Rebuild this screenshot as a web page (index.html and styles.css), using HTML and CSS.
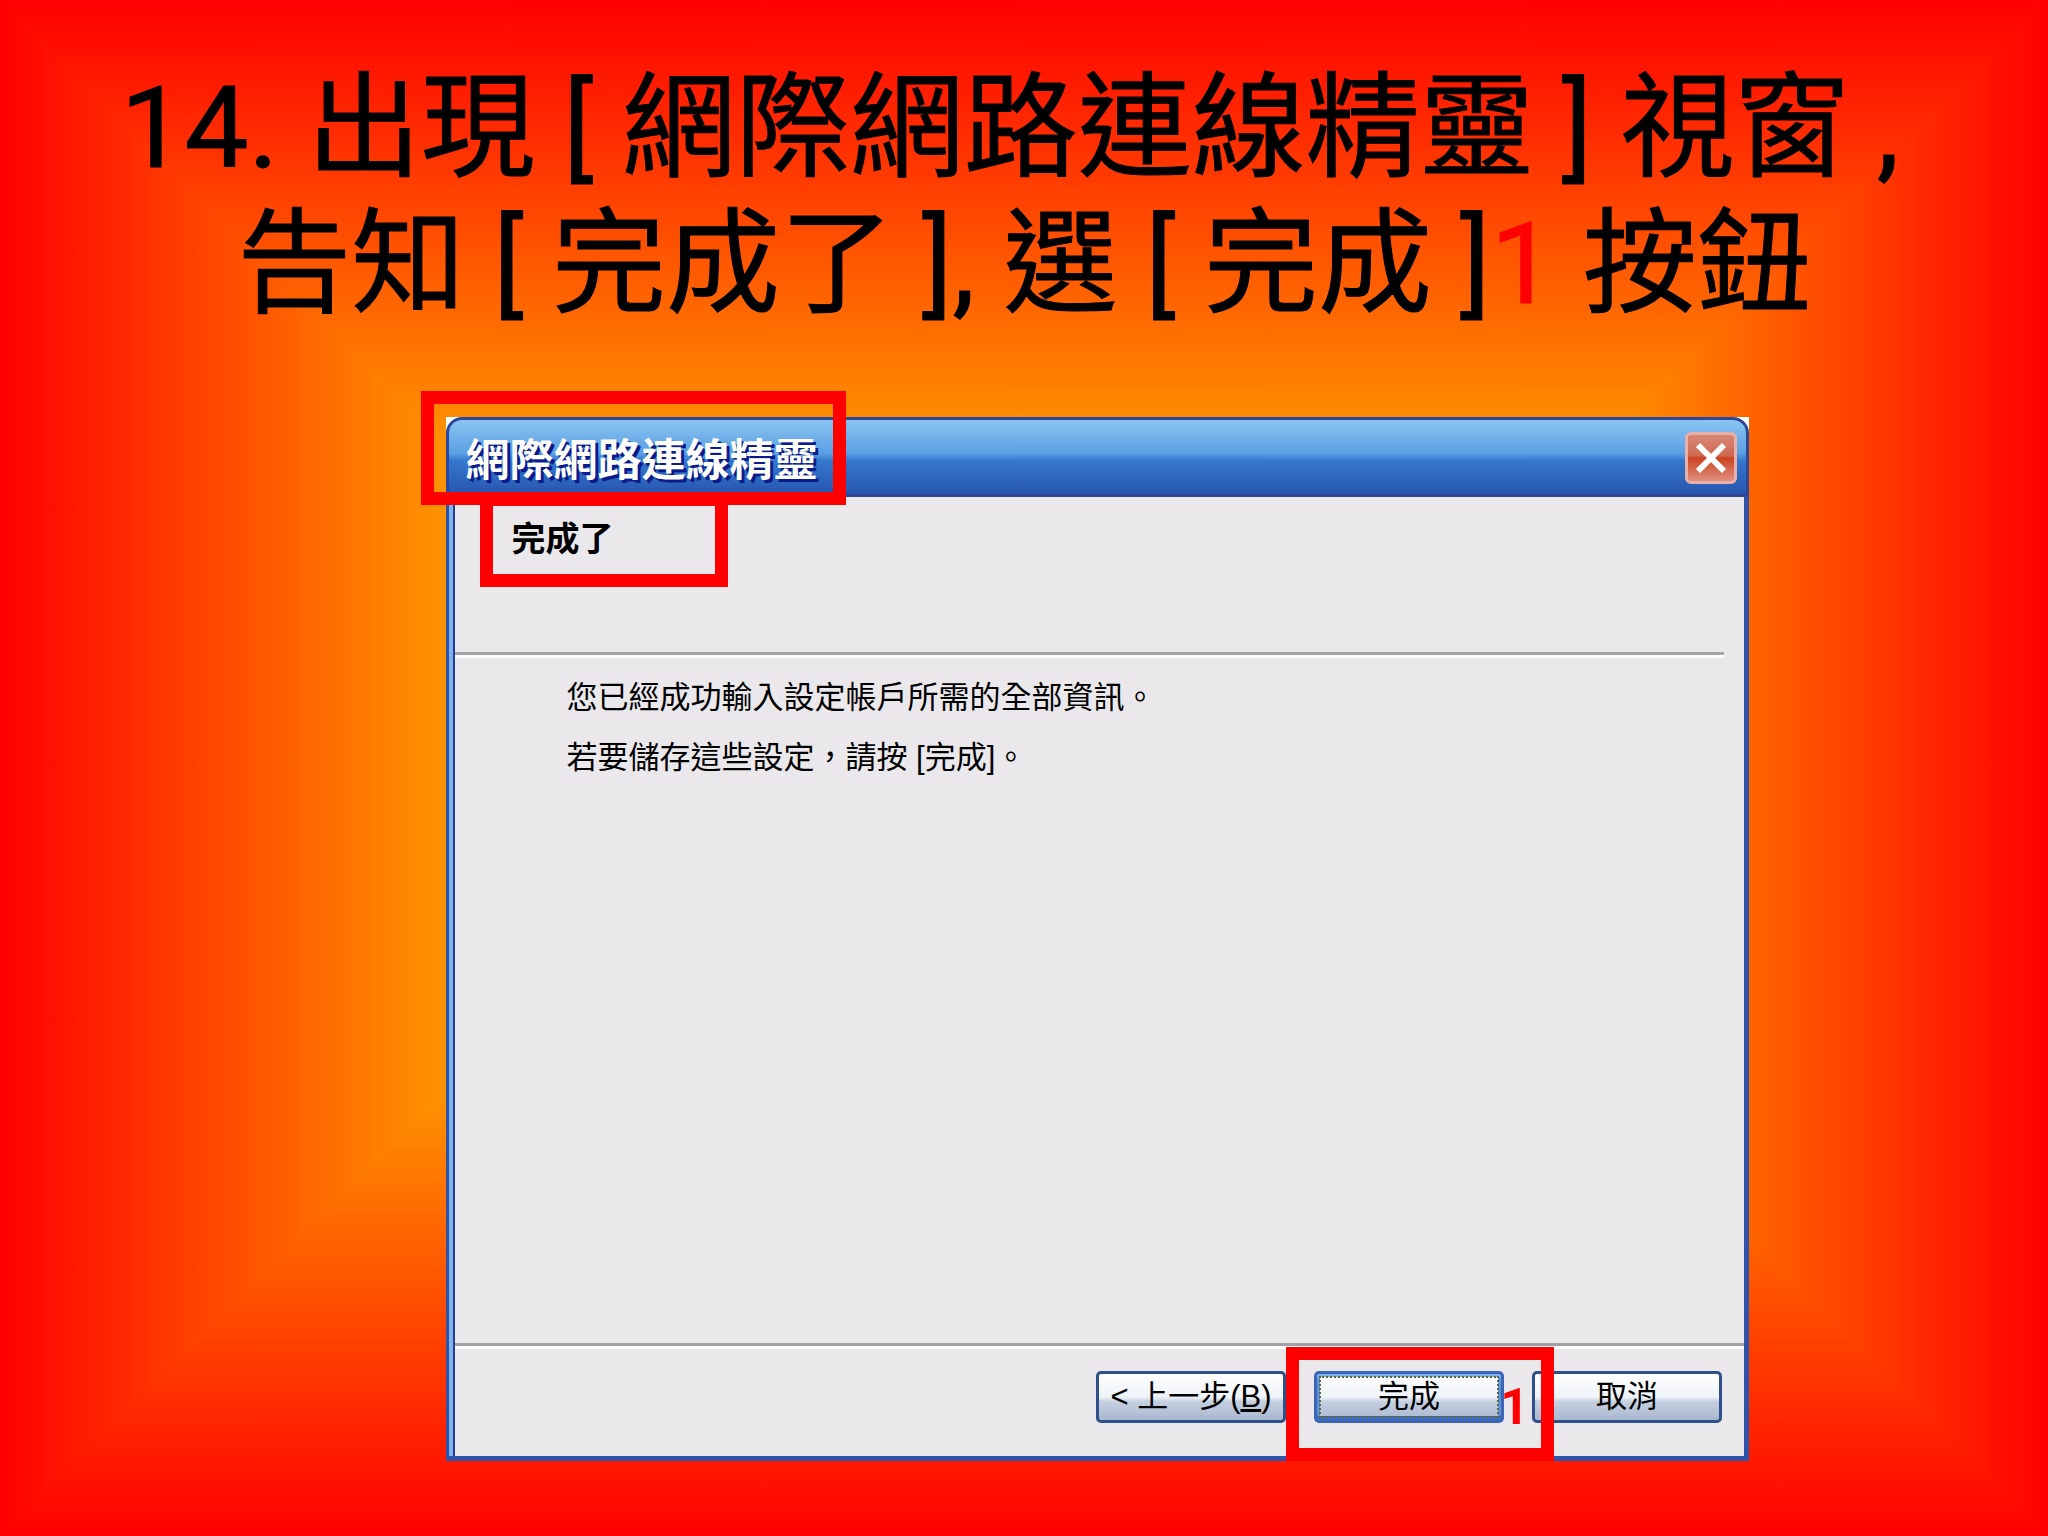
FILE: index.html
```html
<!DOCTYPE html>
<html lang="zh-Hant">
<head>
    <meta charset="UTF-8">
    <meta name="viewport" content="width=device-width, initial-scale=1.0">
    <title>網際網路連線精靈</title>
    <link rel="stylesheet" href="styles.css">
</head>
<body>
    <main class="slide">
        <h1 class="title">
            14. 出現 [ 網際網路連線精靈 ] 視窗 ,&nbsp;<br>
            告知 [ 完成了 ], 選 [ 完成 ]<span class="step">1</span> 按鈕
        </h1>

        <section class="window">
            <header class="topbar">
                <div class="titlebar">
                    <h2 class="caption">網際網路連線精靈</h2>
                    <button class="close" type="button" aria-label="關閉">
                        <svg viewBox="0 0 46 46">
                            <path d="M10 10L36 36M36 10L10 36" stroke="#fff" stroke-width="6"/>
                        </svg>
                    </button>
                </div>
            </header>

            <div class="heading">
                <h3>完成了</h3>
            </div>

            <div class="message">
                <p>您已經成功輸入設定帳戶所需的全部資訊。</p>
                <p>若要儲存這些設定，請按 [完成]。</p>
            </div>

            <footer class="actions">
                <button class="btn" type="button">&lt; 上一步(<u>B</u>)</button>
                <button class="btn primary" type="button">完成</button>
                <button class="btn" type="button">取消</button>
            </footer>

            <div class="mark mark-caption"></div>
            <div class="mark mark-heading"></div>
            <div class="mark mark-finish"><span class="number">1</span></div>
        </section>
    </main>
</body>
</html>
```

FILE: styles.css
```css
* {
    margin: 0;
    padding: 0;
    box-sizing: border-box;
}

body {
    font-family: "Liberation Sans", "Noto Sans CJK TC", sans-serif;
    color: #000;
}

/* the darker of both ramps wins, which gives square rings */
.slide {
    display: flex;
    flex-direction: column;
    min-height: 100vh;
    padding: 60px 0 75px;
    background-color: #f90;
    background-image:
        linear-gradient(to right, #f00, #f90 460px, #f90 calc(100% - 460px), #f00),
        linear-gradient(to bottom, #f00, #f90 460px, #f90 calc(100% - 460px), #f00);
    background-blend-mode: darken, normal;
}

.title {
    height: 357px;
    font-family: Roboto, "Noto Sans CJK TC", sans-serif;
    font-size: 114px;
    font-weight: 400;
    line-height: 136px;
    text-align: center;
    white-space: nowrap;
    -webkit-text-stroke: 1px;
}

.step {
    color: #f00;
}

.window {
    position: relative;
    flex: 1;
    display: flex;
    flex-direction: column;
    width: 63.6%;
    margin-left: 21.8%;
    padding-left: 6px;
    border: solid #2f53a8;
    border-width: 0 5px 5px 3px;
    background: linear-gradient(to right, #7fb3f0 4px, #243f92 4px, #243f92 6px, #ebe8ec 6px);
}

/* runs over the side borders, white shows in the cut corners */
.topbar {
    margin: 0 -5px 0 -9px;
    background: #fff;
}

.titlebar {
    display: flex;
    align-items: center;
    justify-content: space-between;
    height: 80px;
    padding: 2px 9px 0 16px;
    border: 3px solid #2c479c;
    border-radius: 16px 16px 0 0;
    background: linear-gradient(#8ac4f0, #5a9fe4 45%, #3478cc 55%, #2855b0);
}

.caption {
    padding-top: 6px;
    color: #fff;
    font-size: 44px;
    line-height: 60px;
    text-shadow: 3px 3px 0 #0a1c8c;
}

.close {
    width: 52px;
    height: 52px;
    border: 3px solid #e8b0a8;
    border-radius: 6px;
    background: linear-gradient(#d88878, #d06850 45%, #cc4420 50%, #e09080);
}

.close svg {
    display: block;
    width: 100%;
    height: 100%;
}

.heading {
    height: 158px;
    margin-right: 20px;
    padding: 18px 56px;
    border-bottom: 3px solid #a5a3a8;
    box-shadow: 0 3px 0 #fff;
}

.heading h3 {
    font-size: 34px;
    line-height: 48px;
}

.message {
    flex: 1;
    padding: 13px 111px;
    font-size: 31px;
    line-height: 60px;
}

.actions {
    display: flex;
    justify-content: flex-end;
    gap: 28px;
    height: 113px;
    padding: 25px 22px;
    border-top: 3px solid #a0a0a5;
    box-shadow: inset 0 3px 0 #fff;
}

.btn {
    width: 190px;
    height: 52px;
    border: 3px solid #2f5088;
    border-radius: 5px;
    background: linear-gradient(#fff, #eef3f8 50%, #c5d0e0 60%, #a9b8d0);
    font-family: inherit;
    font-size: 31px;
    line-height: 40px;
    white-space: nowrap;
}

.primary {
    border-color: #3a65b8;
    box-shadow: inset 0 3px 0 #7fb0ee, inset 0 -4px 0 #3f6cc0, inset 3px 0 0 #5f92d8, inset -3px 0 0 #5f92d8;
    outline: 2px dotted #5a6a30;
    outline-offset: -7px;
}

/* red frames laid over the window */
.mark {
    position: absolute;
    border: 13px solid #f00;
}

.mark-caption {
    top: -26px;
    left: -28px;
    width: 425px;
    height: 114px;
}

.mark-heading {
    top: 76px;
    left: 31px;
    width: 248px;
    height: 94px;
}

.mark-finish {
    right: 190px;
    bottom: -5px;
    width: 268px;
    height: 114px;
}

.number {
    position: absolute;
    right: 12px;
    bottom: 13px;
    color: #f00;
    font-family: Roboto, sans-serif;
    font-size: 50px;
    font-weight: 700;
    line-height: 56px;
}
```
